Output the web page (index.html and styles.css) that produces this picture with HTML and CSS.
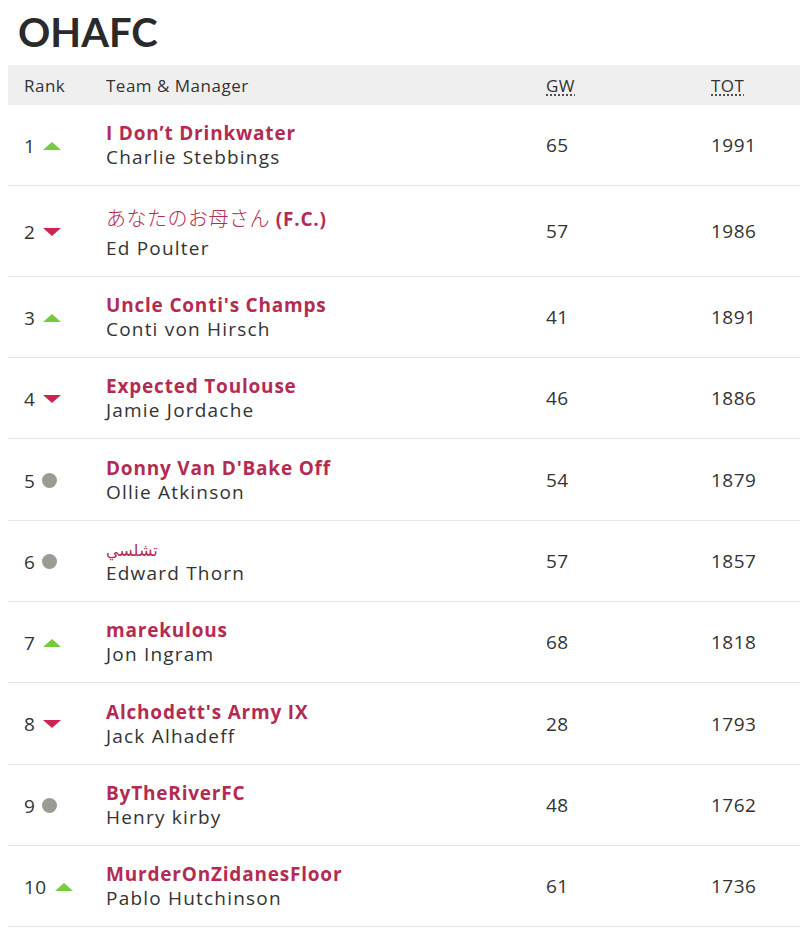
FILE: index.html
```html
<!DOCTYPE html>
<html lang="en">
<head>
<meta charset="utf-8">
<title>OHAFC</title>
<link rel="stylesheet" href="styles.css">
</head>
<body>
<div class="page">
  <h1 class="title">OHAFC</h1>
  <table class="standings">
    <colgroup>
      <col class="col-rank">
      <col class="col-team">
      <col class="col-gw">
      <col class="col-tot">
    </colgroup>
    <thead>
      <tr class="head">
        <th class="h-rank">Rank</th>
        <th class="h-team">Team &amp; Manager</th>
        <th class="h-num"><abbr title="Gameweek">GW</abbr></th>
        <th class="h-num"><abbr title="Total">TOT</abbr></th>
      </tr>
    </thead>
    <tbody>
      <tr class="row">
        <td class="rank"><span class="rank-num">1</span><span class="move up"></span></td>
        <td class="team"><div class="team-name">I Don’t Drinkwater</div><div class="manager">Charlie Stebbings</div></td>
        <td class="num">65</td>
        <td class="num">1991</td>
      </tr>
      <tr class="row">
        <td class="rank"><span class="rank-num">2</span><span class="move down"></span></td>
        <td class="team"><div class="team-name team-name--cjk"><span class="cjk">あなたのお母さん</span> (F.C.)</div><div class="manager">Ed Poulter</div></td>
        <td class="num">57</td>
        <td class="num">1986</td>
      </tr>
      <tr class="row">
        <td class="rank"><span class="rank-num">3</span><span class="move up"></span></td>
        <td class="team"><div class="team-name">Uncle Conti's Champs</div><div class="manager">Conti von Hirsch</div></td>
        <td class="num">41</td>
        <td class="num">1891</td>
      </tr>
      <tr class="row">
        <td class="rank"><span class="rank-num">4</span><span class="move down"></span></td>
        <td class="team"><div class="team-name">Expected Toulouse</div><div class="manager">Jamie Jordache</div></td>
        <td class="num">46</td>
        <td class="num">1886</td>
      </tr>
      <tr class="row">
        <td class="rank"><span class="rank-num">5</span><span class="move same"></span></td>
        <td class="team"><div class="team-name">Donny Van D'Bake Off</div><div class="manager">Ollie Atkinson</div></td>
        <td class="num">54</td>
        <td class="num">1879</td>
      </tr>
      <tr class="row">
        <td class="rank"><span class="rank-num">6</span><span class="move same"></span></td>
        <td class="team"><div class="team-name"><span class="arabic" dir="rtl">تشلسي</span></div><div class="manager">Edward Thorn</div></td>
        <td class="num">57</td>
        <td class="num">1857</td>
      </tr>
      <tr class="row">
        <td class="rank"><span class="rank-num">7</span><span class="move up"></span></td>
        <td class="team"><div class="team-name">marekulous</div><div class="manager">Jon Ingram</div></td>
        <td class="num">68</td>
        <td class="num">1818</td>
      </tr>
      <tr class="row">
        <td class="rank"><span class="rank-num">8</span><span class="move down"></span></td>
        <td class="team"><div class="team-name">Alchodett's Army IX</div><div class="manager">Jack Alhadeff</div></td>
        <td class="num">28</td>
        <td class="num">1793</td>
      </tr>
      <tr class="row">
        <td class="rank"><span class="rank-num">9</span><span class="move same"></span></td>
        <td class="team"><div class="team-name">ByTheRiverFC</div><div class="manager">Henry kirby</div></td>
        <td class="num">48</td>
        <td class="num">1762</td>
      </tr>
      <tr class="row">
        <td class="rank"><span class="rank-num">10</span><span class="move up"></span></td>
        <td class="team"><div class="team-name">MurderOnZidanesFloor</div><div class="manager">Pablo Hutchinson</div></td>
        <td class="num">61</td>
        <td class="num">1736</td>
      </tr>
    </tbody>
  </table>
</div>
</body>
</html>
```
FILE: styles.css
```css
html, body {
  margin: 0;
  padding: 0;
  background: #ffffff;
}

body {
  font-family: "Open Sans", Lato, "Noto Sans CJK JP", sans-serif;
  color: #333333;
}

.page {
  padding-left: 8px;
}

.title {
  margin: 0 0 9px 10px;
  padding-top: 8px;
  font-family: Lato, sans-serif;
  font-size: 40px;
  line-height: 48px;
  font-weight: 700;
  color: #2a2a2a;
}

.standings {
  width: 792px;
  border-collapse: collapse;
  table-layout: fixed;
}

.col-rank { width: 98px; }
.col-team { width: 440px; }
.col-gw { width: 165px; }
.col-tot { width: 89px; }

.head {
  background: #efefef;
  height: 40px;
}

.head th {
  text-align: left;
  font-weight: 400;
  font-size: 17px;
  letter-spacing: 0.5px;
  color: #333333;
  padding: 0;
  vertical-align: middle;
}

.h-rank {
  padding-left: 16px !important;
}

.h-num abbr {
  text-decoration: underline dotted;
  text-underline-offset: 3px;
}

.row td {
  border-bottom: 1px solid #e6e6e6;
  padding: 16px 0;
  height: 48.3px;
  vertical-align: middle;
  font-size: 19px;
  letter-spacing: 0.5px;
}

.rank {
  padding-left: 16px !important;
}

.rank-num {
  display: inline-block;
  vertical-align: middle;
}

.move {
  display: inline-block;
  vertical-align: middle;
  margin-left: 8px;
}

.move.up {
  width: 0;
  height: 0;
  border-left: 9px solid transparent;
  border-right: 9px solid transparent;
  border-bottom: 8px solid #74cb3e;
}

.move.down {
  width: 0;
  height: 0;
  border-left: 9px solid transparent;
  border-right: 9px solid transparent;
  border-top: 8px solid #cd2454;
}

.move.same {
  width: 15px;
  height: 15px;
  border-radius: 50%;
  background: #9b9b94;
  margin-left: 7px;
}

.team-name {
  font-weight: 700;
  color: #b42b52;
  line-height: 24px;
  letter-spacing: 0.8px;
}

.team-name--cjk {
  line-height: 32.6px;
}

.cjk {
  font-family: "Noto Sans CJK JP", sans-serif;
  font-weight: 300;
  font-size: 20px;
  letter-spacing: 0.5px;
}

.arabic {
  font-family: "DejaVu Sans", sans-serif;
  font-weight: 400;
  font-size: 16px;
  line-height: 16px;
  letter-spacing: 0;
}

.manager {
  line-height: 24px;
  color: #333333;
  letter-spacing: 1.2px;
}

.num {
  color: #333333;
}
```
